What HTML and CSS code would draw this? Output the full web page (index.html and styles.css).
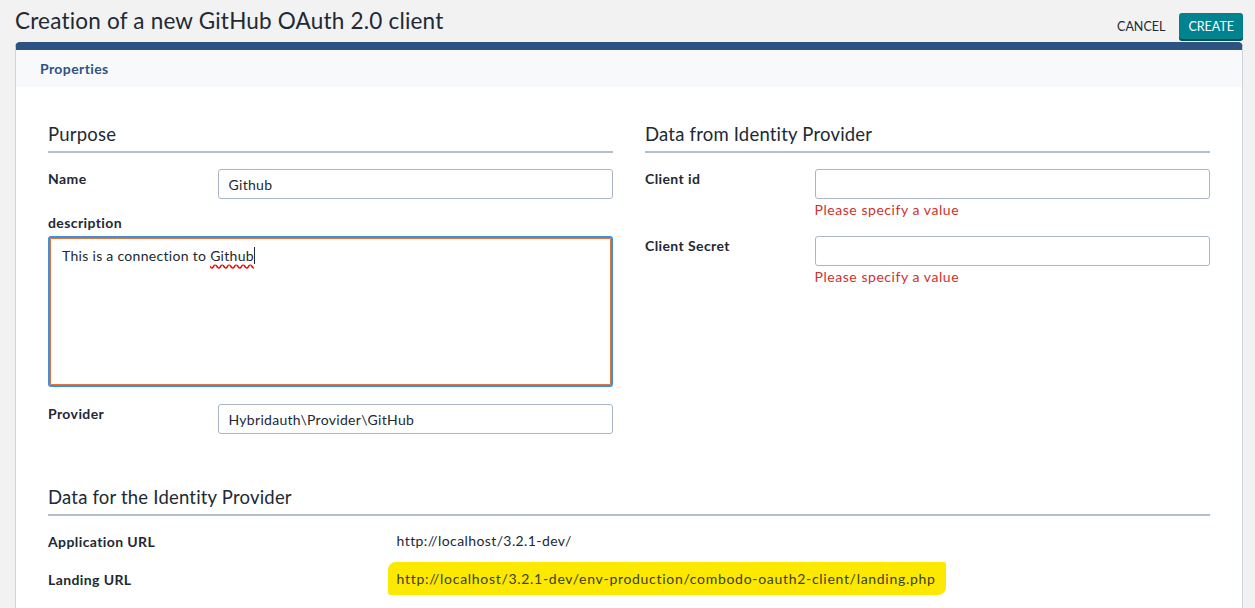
FILE: index.html
```html
<!DOCTYPE html>
<html lang="en">
<head>
    <meta charset="UTF-8">
    <meta name="viewport" content="width=device-width, initial-scale=1.0">
    <title>Creation of a new GitHub OAuth 2.0 client</title>
    <link rel="stylesheet" href="styles.css">
</head>
<body>
    <div class="page-header">
        <h1>Creation of a new GitHub OAuth 2.0 client</h1>
        <div class="actions">
            <button class="btn-cancel">CANCEL</button>
            <button class="btn-create">CREATE</button>
        </div>
    </div>

    <div class="panel">
        <div class="panel-tab">Properties</div>
        <div class="panel-body">
            <div class="columns">
                <div class="fieldset">
                    <h2>Purpose</h2>
                    <div class="field">
                        <label>Name</label>
                        <div class="value"><input type="text" value="Github"></div>
                    </div>
                    <div class="field stacked">
                        <label>description</label>
                        <div class="textarea-box">This is a connection to <span class="typo">Github</span><span class="caret"></span></div>
                    </div>
                    <div class="field">
                        <label>Provider</label>
                        <div class="value"><input type="text" value="Hybridauth\Provider\GitHub"></div>
                    </div>
                </div>
                <div class="fieldset">
                    <h2>Data from Identity Provider</h2>
                    <div class="field">
                        <label>Client id</label>
                        <div class="value">
                            <input type="text" value="">
                            <div class="error">Please specify a value</div>
                        </div>
                    </div>
                    <div class="field">
                        <label>Client Secret</label>
                        <div class="value">
                            <input type="text" value="">
                            <div class="error">Please specify a value</div>
                        </div>
                    </div>
                </div>
            </div>

            <div class="fieldset wide">
                <h2>Data for the Identity Provider</h2>
                <div class="field static">
                    <label>Application URL</label>
                    <div class="value">http://localhost/3.2.1-dev/</div>
                </div>
                <div class="field static">
                    <label>Landing URL</label>
                    <div class="value"><span class="marker">http://localhost/3.2.1-dev/env-production/combodo-oauth2-client/landing.php</span></div>
                </div>
            </div>
        </div>
    </div>
</body>
</html>
```

FILE: styles.css
```css
body {
    font-family: Lato, "Open Sans", sans-serif;
    margin: 0;
    background-color: #f2f2f2;
    color: #212934;
    font-size: 14px;
    letter-spacing: 0.4px;
}
.page-header {
    display: flex;
    justify-content: space-between;
    align-items: center;
    padding: 5px 12px 3px 15px;
}
.page-header h1 {
    margin: 0 0 3px;
    font-size: 22.5px;
    font-weight: 400;
    letter-spacing: 0.2px;
}
.actions {
    display: flex;
    align-items: center;
    gap: 5px;
    padding-top: 8px;
}
.actions button {
    font-family: inherit;
    font-size: 12.5px;
    letter-spacing: 0;
    border: none;
    cursor: pointer;
    padding: 6px 9px 5px;
}
.btn-cancel {
    background: transparent;
    color: #212934;
}
.btn-create {
    background-color: #00838f;
    color: #fff;
    border-radius: 3px;
    box-shadow: 0 2px 0 #004f56;
}
.panel {
    margin: 0 12px 0 15px;
    border: 1px solid #ccd3dc;
    border-top: 8px solid #2c5382;
    border-radius: 5px 5px 0 0;
    background: #fff;
}
.panel-tab {
    background-color: #f8f9fa;
    color: #2c5382;
    font-weight: 700;
    padding: 10px 24px 10px;
    line-height: 17px;
}
.panel-body {
    padding: 36px 32px 20px;
}
.columns {
    display: grid;
    grid-template-columns: 1fr 1fr;
    gap: 32px;
}
.fieldset h2 {
    margin: 0 0 16px;
    font-size: 18.5px;
    font-weight: 400;
    letter-spacing: 0.2px;
    padding-bottom: 6px;
    border-bottom: 2px solid #b4bfcc;
}
.field {
    display: flex;
    margin-bottom: 12px;
}
.field label {
    width: 30%;
    font-weight: 700;
    padding-top: 1px;
}
.field .value {
    flex: 1;
}
.field input {
    box-sizing: border-box;
    width: 100%;
    height: 30px;
    border: 1px solid #acb6c2;
    border-radius: 3px;
    padding: 0 10px;
    font-family: inherit;
    font-size: 14px;
    letter-spacing: 0.3px;
    color: #212934;
}
.error {
    color: #d0312d;
    letter-spacing: 0.55px;
    margin-top: 2px;
    margin-bottom: 6px;
}
.field.stacked {
    flex-direction: column;
    gap: 5px;
    margin-top: 14px;
    margin-bottom: 17px;
}
.field.stacked label {
    width: auto;
}
.textarea-box {
    box-sizing: border-box;
    height: 151px;
    border: 2px solid #3e91e2;
    box-shadow: inset 0 0 0 1px #e0763b;
    border-radius: 3px;
    padding: 9px 12px;
    letter-spacing: 0.3px;
}
.typo {
    text-decoration: underline wavy #e00;
    text-decoration-skip-ink: none;
    text-underline-offset: 3px;
}
.caret {
    display: inline-block;
    width: 1px;
    height: 17px;
    background: #212934;
    vertical-align: -3px;
}
.fieldset.wide {
    margin-top: 40px;
}
.field.static {
    margin-bottom: 20px;
}
.marker {
    background-color: #fde800;
    padding: 8px 10px 8px 9px;
    margin-left: -9px;
    border-radius: 8px 2px 8px 3px;
    color: #3a4120;
    letter-spacing: 0.7px;
}
```
